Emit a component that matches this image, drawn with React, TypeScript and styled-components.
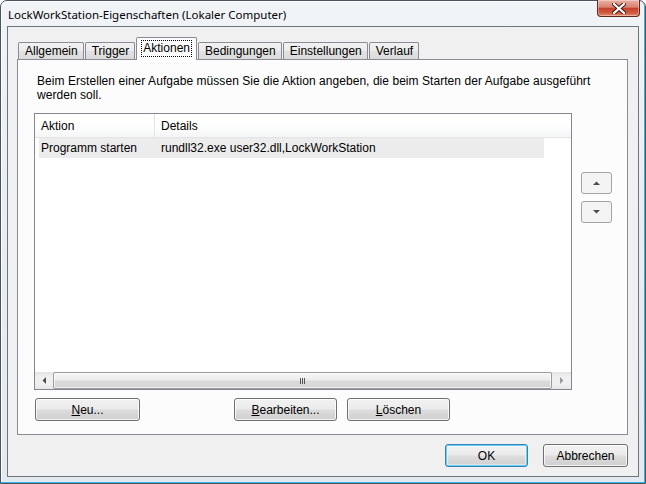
import React from 'react';
import styled, { createGlobalStyle } from 'styled-components';

const Global = createGlobalStyle`
  html, body { margin: 0; padding: 0; background: #fff; }
  body { font-family: "Liberation Sans", Arial, sans-serif; font-size: 12px; color: #000; }
  * { box-sizing: border-box; }
`;

const Window = styled.div`
  width: 646px;
  height: 484px;
  display: flex;
  flex-direction: column;
  padding: 0 6px 6px 6px;
  border: 1px solid #4a545e;
  border-radius: 7px 7px 0 0;
  background: linear-gradient(180deg, #f1f4f7 0%, #e9eef2 40%, #e3e9ee 100%);
  box-shadow: inset -1px -1px 0 #2db6e6, inset 1px 1px 0 rgba(255, 255, 255, 0.85);
`;

const TitleBar = styled.div`
  height: 25px;
  display: flex;
  align-items: flex-start;
  justify-content: space-between;
`;

const Title = styled.div`
  font-family: "Noto Sans", "Open Sans", sans-serif;
  font-size: 11.5px;
  line-height: 16px;
  padding: 6px 0 0 1px;
  color: #000;
`;

const CloseButton = styled.div`
  width: 43px;
  height: 17px;
  margin-top: -1px;
  margin-right: -1px;
  border: 1px solid #5d2a22;
  border-top: none;
  border-radius: 0 0 4px 4px;
  background: linear-gradient(180deg, #eab0a3 0%, #d9826f 45%, #c4412a 52%, #cf5a40 80%, #e68c6f 100%);
  box-shadow: inset 0 0 0 1px rgba(255, 255, 255, 0.35);
  display: flex;
  align-items: center;
  justify-content: center;
`;

const Client = styled.div`
  flex: 1;
  display: flex;
  flex-direction: column;
  border: 1px solid #6d7680;
  background: #f0f0f0;
  padding: 10px 10px 8px 9px;
`;

const TabStrip = styled.div`
  height: 23px;
  display: flex;
  align-items: flex-end;
  padding-left: 1px;
  margin-bottom: -1px;
  position: relative;
  z-index: 1;
`;

const Tab = styled.div<{ $active?: boolean }>`
  height: ${(p) => (p.$active ? '23px' : '17px')};
  margin-bottom: ${(p) => (p.$active ? '0' : '1px')};
  margin-right: 1px;
  padding: ${(p) => (p.$active ? '2px 5px 0 5px' : '0 5px 0 6px')};
  border: 1px solid #898c95;
  border-bottom: none;
  border-radius: 2px 2px 0 0;
  background: ${(p) =>
    p.$active
      ? '#fcfcfc'
      : 'linear-gradient(180deg, #f2f2f2 0%, #ebebeb 50%, #e2e2e2 51%, #dbdbdb 100%)'};
  font-size: 12px;
  line-height: 16px;
  white-space: nowrap;
`;

const TabLabel = styled.span`
  display: inline-block;
  padding: 0 1px;
  outline: 1px dotted #000;
  outline-offset: 0;
  line-height: 15px;
`;

const Panel = styled.div`
  height: 376px;
  border: 1px solid #898c95;
  background: #fcfcfc;
  padding: 14px 0 0 16px;
  display: flex;
  flex-direction: column;
`;

const Description = styled.p`
  margin: 0 0 0 3px;
  font-size: 12px;
  line-height: 14px;
  letter-spacing: 0.05px;
  width: 570px;
`;

const ContentRow = styled.div`
  display: flex;
  margin-top: 11px;
  gap: 9px;
`;

const ListView = styled.div`
  width: 538px;
  height: 277px;
  border: 1px solid #828790;
  background: #fff;
  display: flex;
  flex-direction: column;
`;

const Header = styled.div`
  height: 24px;
  display: flex;
  border-bottom: 1px solid #e2e3e5;
  background: linear-gradient(180deg, #ffffff 0%, #ffffff 45%, #f5f6f7 100%);
`;

const HeaderCell = styled.div<{ $w?: number }>`
  ${(p) => (p.$w ? `width: ${p.$w}px;` : 'flex: 1;')}
  padding-left: 6px;
  line-height: 24px;
  border-right: ${(p) => (p.$w ? '1px solid #e3e4e6' : 'none')};
`;

const Rows = styled.div`
  flex: 1;
  padding: 0 0 0 4px;
`;

const Row = styled.div`
  width: 505px;
  height: 20px;
  display: flex;
  align-items: center;
  background: #ececec;
`;

const Cell = styled.div<{ $w?: number }>`
  ${(p) => (p.$w ? `width: ${p.$w}px; padding-left: 2px;` : 'flex: 1;')}
  white-space: nowrap;
`;

const HScroll = styled.div`
  height: 17px;
  display: flex;
  align-items: stretch;
  background: linear-gradient(180deg, #e3e3e3 0%, #f0f0f0 30%, #f0f0f0 70%, #e6e6e6 100%);
`;

const ScrollArrow = styled.div`
  width: 17px;
  display: flex;
  align-items: center;
  justify-content: center;
`;

const Thumb = styled.div`
  width: 499px;
  margin: 0 1px;
  border: 1px solid #9c9c9c;
  border-radius: 2px;
  background: linear-gradient(180deg, #f6f6f6 0%, #ececec 48%, #dcdcdc 52%, #d3d3d3 100%);
  box-shadow: inset 0 0 0 1px rgba(255, 255, 255, 0.7);
  display: flex;
  align-items: center;
  justify-content: center;
`;

const Grip = styled.div`
  display: flex;
  gap: 1px;
  & > span {
    width: 1px;
    height: 6px;
    background: #555;
  }
`;

const Side = styled.div`
  display: flex;
  flex-direction: column;
  gap: 7px;
  padding-top: 59px;
`;

const SmallButton = styled.div`
  width: 31px;
  height: 22px;
  border: 1px solid #a3a3a3;
  border-radius: 3px;
  background: #f4f4f4;
  display: flex;
  align-items: center;
  justify-content: center;
`;

const ActionRow = styled.div`
  display: flex;
  margin-top: 8px;
  padding-left: 1px;
`;

const Button = styled.div<{ $w: number; $gap?: number; $default?: boolean }>`
  width: ${(p) => p.$w}px;
  height: 23px;
  margin-left: ${(p) => p.$gap ?? 0}px;
  border: 1px solid ${(p) => (p.$default ? '#3c7fb1' : '#707070')};
  border-radius: 3px;
  background: linear-gradient(180deg, #f2f2f2 0%, #ebebeb 48%, #dddddd 52%, #cfcfcf 100%);
  box-shadow: ${(p) =>
    p.$default
      ? 'inset 0 0 0 1px #5fd2f8, inset 0 0 0 2px rgba(255,255,255,0.4)'
      : 'inset 0 0 0 1px rgba(255,255,255,0.75)'};
  display: flex;
  align-items: center;
  justify-content: center;
  font-size: 12px;
  line-height: 14px;
  color: #000;
`;

const Mnemonic = styled.span`
  text-decoration: underline;
`;

const Footer = styled.div`
  display: flex;
  justify-content: flex-end;
  margin-top: 9px;
`;

const Tri = ({ dir, color = '#4d4d4d' }: { dir: 'up' | 'down' | 'left' | 'right'; color?: string }) => {
  const pts: Record<string, string> = {
    up: '0,4 7,4 3.5,0.5',
    down: '0,0 7,0 3.5,3.5',
    left: '4,0 4,7 0.5,3.5',
    right: '0,0 0,7 3.5,3.5',
  };
  const vert = dir === 'up' || dir === 'down';
  return (
    <svg width={vert ? 7 : 4} height={vert ? 4 : 7} viewBox={vert ? '0 0 7 4' : '0 0 4 7'}>
      <polygon points={pts[dir]} fill={color} />
    </svg>
  );
};

export default function App() {
  return (
    <>
      <Global />
      <Window>
        <TitleBar>
          <Title>LockWorkStation-Eigenschaften (Lokaler Computer)</Title>
          <CloseButton>
            <svg width="14" height="11" viewBox="0 0 14 11">
              <path d="M2 1 L12 10 M12 1 L2 10" stroke="#3b1710" strokeWidth="4" strokeLinecap="square" />
              <path d="M2 1 L12 10 M12 1 L2 10" stroke="#fff" strokeWidth="2.2" strokeLinecap="square" />
            </svg>
          </CloseButton>
        </TitleBar>
        <Client>
          <TabStrip>
            <Tab>Allgemein</Tab>
            <Tab>Trigger</Tab>
            <Tab $active>
              <TabLabel>Aktionen</TabLabel>
            </Tab>
            <Tab>Bedingungen</Tab>
            <Tab>Einstellungen</Tab>
            <Tab>Verlauf</Tab>
          </TabStrip>
          <Panel>
            <Description>
              Beim Erstellen einer Aufgabe müssen Sie die Aktion angeben, die beim Starten der Aufgabe ausgeführt
              werden soll.
            </Description>
            <ContentRow>
              <ListView>
                <Header>
                  <HeaderCell $w={120}>Aktion</HeaderCell>
                  <HeaderCell>Details</HeaderCell>
                </Header>
                <Rows>
                  <Row>
                    <Cell $w={122}>Programm starten</Cell>
                    <Cell>rundll32.exe user32.dll,LockWorkStation</Cell>
                  </Row>
                </Rows>
                <HScroll>
                  <ScrollArrow>
                    <Tri dir="left" />
                  </ScrollArrow>
                  <Thumb>
                    <Grip>
                      <span />
                      <span />
                      <span />
                    </Grip>
                  </Thumb>
                  <ScrollArrow>
                    <Tri dir="right" color="#9a9a9a" />
                  </ScrollArrow>
                </HScroll>
              </ListView>
              <Side>
                <SmallButton>
                  <Tri dir="up" />
                </SmallButton>
                <SmallButton>
                  <Tri dir="down" />
                </SmallButton>
              </Side>
            </ContentRow>
            <ActionRow>
              <Button $w={105}>
                <span>
                  <Mnemonic>N</Mnemonic>eu...
                </span>
              </Button>
              <Button $w={103} $gap={94}>
                <span>
                  <Mnemonic>B</Mnemonic>earbeiten...
                </span>
              </Button>
              <Button $w={103} $gap={10}>
                <span>
                  <Mnemonic>L</Mnemonic>öschen
                </span>
              </Button>
            </ActionRow>
          </Panel>
          <Footer>
            <Button $w={83} $default>
              OK
            </Button>
            <Button $w={85} $gap={15}>
              Abbrechen
            </Button>
          </Footer>
        </Client>
      </Window>
    </>
  );
}
